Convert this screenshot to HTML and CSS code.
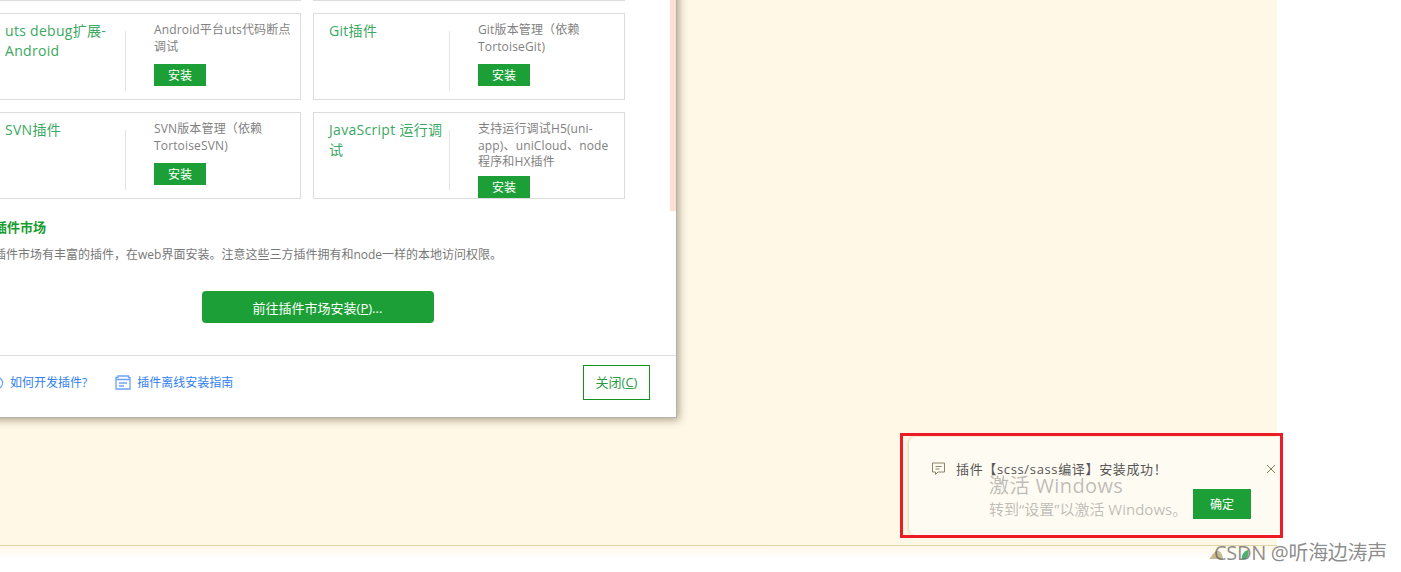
FILE: index.html
```html
<!DOCTYPE html>
<html lang="zh-CN">
<head>
    <meta charset="UTF-8">
    <meta name="viewport" content="width=device-width, initial-scale=1.0">
    <title>插件安装</title>
    <link rel="stylesheet" href="styles.css">
</head>
<body>
    <div class="desk">
        <div class="dialog">
            <div class="scroll-thumb"></div>
            <div class="plugin-grid">
                <div class="card"></div>
                <div class="card"></div>

                <div class="card">
                    <div class="card-name">uts debug扩展-Android</div>
                    <div class="card-info">
                        <p>Android平台uts代码断点调试</p>
                        <a href="#" class="install">安装</a>
                    </div>
                </div>
                <div class="card">
                    <div class="card-name">Git插件</div>
                    <div class="card-info">
                        <p>Git版本管理（依赖TortoiseGit)</p>
                        <a href="#" class="install">安装</a>
                    </div>
                </div>

                <div class="card">
                    <div class="card-name">SVN插件</div>
                    <div class="card-info">
                        <p>SVN版本管理（依赖TortoiseSVN)</p>
                        <a href="#" class="install">安装</a>
                    </div>
                </div>
                <div class="card">
                    <div class="card-name">JavaScript 运行调试</div>
                    <div class="card-info">
                        <p>支持运行调试H5(uni-app)、uniCloud、node程序和HX插件</p>
                        <a href="#" class="install">安装</a>
                    </div>
                </div>
            </div>

            <h3 class="market-title">插件市场</h3>
            <p class="market-desc">插件市场有丰富的插件，在web界面安装。注意这些三方插件拥有和node一样的本地访问权限。</p>
            <div class="market-action">
                <a href="#" class="market-btn">前往插件市场安装(<u>P</u>)...</a>
            </div>

            <div class="dialog-footer">
                <a href="#" class="help-link">
                    <svg class="help-icon" width="14" height="14" viewBox="0 0 14 14" fill="none" stroke="#6ea2f7" stroke-width="1.2"><circle cx="7" cy="7" r="5.6"/></svg>
                    如何开发插件?
                </a>
                <a href="#" class="help-link">
                    <svg class="help-icon" width="16" height="15" viewBox="0 0 16 15" fill="none" stroke="#6ea2f7" stroke-width="1.3"><path d="M3 1h10.500v1.500H15V14H1V2.500h2z"/><path d="M1 4.500h14M4 8h8M4 11h5"/></svg>
                    插件离线安装指南
                </a>
                <a href="#" class="close-btn">关闭(<u>C</u>)</a>
            </div>
        </div>

        <div class="toast">
            <svg class="toast-icon" width="15" height="14" viewBox="0 0 15 14" fill="none" stroke="#8a8468" stroke-width="1"><path d="M1.500 1h12v9H7l-2.500 2.500V10h-3z"/><path d="M4.500 4.500h6M4.500 7h4"/></svg>
            <span class="toast-text">插件【scss/sass编译】安装成功！</span>
            <svg class="toast-close" width="10" height="10" viewBox="0 0 10 10" stroke="#8b7a45" stroke-width="1"><path d="M1 1l8 8M9 1l-8 8"/></svg>
            <a href="#" class="toast-btn">确定</a>
            <div class="activate">
                <div class="activate-title">激活 Windows</div>
                <div class="activate-sub">转到“设置”以激活 Windows。</div>
            </div>
        </div>
        <div class="red-mark"></div>
    </div>
    <div class="status-strip"></div>

    <div class="csdn-mark">
        <svg class="csdn-shapes" width="44" height="10" viewBox="0 0 44 10"><path d="M0 10c2-1 4-7 8-8 3-1 6 4 6 8z" fill="#c9b98f"/><path d="M33 10c-1-4 2-8 6-9 1 4 0 8-3 9z" fill="#4fb06e"/></svg>
        <span class="csdn-text">CSDN @听海边涛声</span>
    </div>
</body>
</html>
```

FILE: styles.css
```css
body {
    margin: 0;
    width: 1401px;
    height: 572px;
    overflow: hidden;
    background-color: #FFFFFF;
    font-family: "Open Sans", "Noto Sans CJK SC", sans-serif;
    font-size: 12px;
    color: #666;
}

a {
    text-decoration: none;
}

.desk {
    position: relative;
    width: 1277px;
    height: 545px;
    background-color: #FFF8E6;
}

/* 插件安装窗口 */
.dialog {
    position: absolute;
    left: -24px;
    top: -100px;
    width: 701px;
    height: 518px;
    box-sizing: border-box;
    padding: 14px 0 0 13px;
    background-color: #FFFFFF;
    border-right: 1px solid #B5B2AA;
    border-bottom: 1px solid #B5B2AA;
    box-shadow: 2px 2px 8px rgba(70, 60, 30, 0.45);
}

.scroll-thumb {
    position: absolute;
    right: 0;
    top: 0;
    width: 6px;
    height: 311px;
    background-color: #FDDFD5;
}

.plugin-grid {
    display: grid;
    grid-template-columns: 312px 312px;
    grid-auto-rows: 87px;
    gap: 12px;
}

.card {
    display: flex;
    box-sizing: border-box;
    border: 1px solid #DCDCDC;
    overflow: hidden;
}

.card-name {
    box-sizing: border-box;
    width: 135px;
    padding: 7px 0 0 15px;
    font-size: 14px;
    line-height: 20px;
    letter-spacing: 0.3px;
    color: #3BA85F;
}

.card-info {
    width: 146px;
    padding-top: 8px;
    position: relative;
}

.card-info::before {
    content: '';
    position: absolute;
    left: 0;
    top: 17px;
    height: 60px;
    border-left: 1px solid #E4E4E4;
}

.card-info p {
    margin: 0 0 5.5px 29px;
    width: 138px;
    min-height: 36.5px;
    line-height: 16.5px;
    letter-spacing: 0.15px;
    color: #7F7F7F;
}

.install {
    display: block;
    width: 52px;
    height: 22px;
    margin-left: 29px;
    background-color: #1C9F36;
    color: #FFFFFF;
    font-size: 12px;
    line-height: 24px;
    text-align: center;
}

.market-title {
    margin: 18px 0 0 5px;
    font-size: 13px;
    line-height: 20px;
    color: #179C2E;
}

.market-desc {
    margin: 9px 0 0 5px;
    line-height: 18px;
    color: #777;
}

.market-action {
    display: flex;
    justify-content: center;
    margin: 27px 0 0 -30px;
}

.market-btn {
    display: block;
    width: 232px;
    height: 32px;
    border-radius: 4px;
    background-color: #1C9F36;
    color: #FFFFFF;
    font-size: 13px;
    line-height: 34px;
    text-align: center;
}

.dialog-footer {
    display: flex;
    align-items: center;
    height: 62px;
    box-sizing: border-box;
    margin: 32px 0 0 -13px;
    padding: 0 26px 8px 14px;
    border-top: 1px solid #DEDEDE;
}

.help-link {
    display: flex;
    align-items: center;
    margin-right: 28px;
    color: #2F80F0;
    line-height: 16px;
}

.help-icon {
    margin-right: 6px;
}

.close-btn {
    margin-left: auto;
    width: 65px;
    height: 33px;
    border: 1px solid #159024;
    color: #2B9A45;
    font-size: 13px;
    line-height: 33px;
    text-align: center;
}

/* 右下角提示 */
.toast {
    position: absolute;
    left: 909px;
    top: 437px;
    width: 371px;
    height: 98px;
    border-radius: 6px 0 0 6px;
    background-color: #FEFBF2;
    box-shadow: -1px 0 3px rgba(190, 170, 110, 0.45);
    color: #555;
}

.toast-icon {
    position: absolute;
    left: 22px;
    top: 25px;
}

.toast-text {
    position: absolute;
    left: 47px;
    top: 22px;
    font-size: 13px;
    line-height: 20px;
    letter-spacing: 0.65px;
}

.toast-close {
    position: absolute;
    left: 357px;
    top: 27px;
}

.toast-btn {
    position: absolute;
    left: 284px;
    top: 52px;
    width: 58px;
    height: 30px;
    background-color: #1C9F36;
    color: #FFFFFF;
    font-size: 12px;
    line-height: 31px;
    text-align: center;
}

/* 系统水印，压在提示上面 */
.activate {
    position: absolute;
    left: 80px;
    top: 35px;
    color: rgba(100, 100, 100, 0.42);
}

.activate-title {
    font-size: 20px;
    line-height: 28px;
    letter-spacing: 0.4px;
}

.activate-sub {
    margin-top: -1px;
    font-size: 15px;
    line-height: 20px;
}

.red-mark {
    position: absolute;
    left: 900px;
    top: 433px;
    width: 377px;
    height: 99px;
    border: 3px solid #ED1C24;
}

.status-strip {
    width: 1277px;
    height: 12px;
    border-top: 1px solid #E0D3A8;
    background: linear-gradient(#FFF8E6, #FFFFFF);
}

.csdn-mark {
    position: absolute;
    left: 1209px;
    top: 540px;
    width: 180px;
    height: 26px;
}

.csdn-shapes {
    position: absolute;
    left: 0;
    top: 9px;
}

.csdn-text {
    position: absolute;
    left: 5px;
    top: 0;
    font-size: 20px;
    line-height: 26px;
    letter-spacing: -0.3px;
    color: rgba(90, 90, 90, 0.7);
    white-space: nowrap;
}
```
